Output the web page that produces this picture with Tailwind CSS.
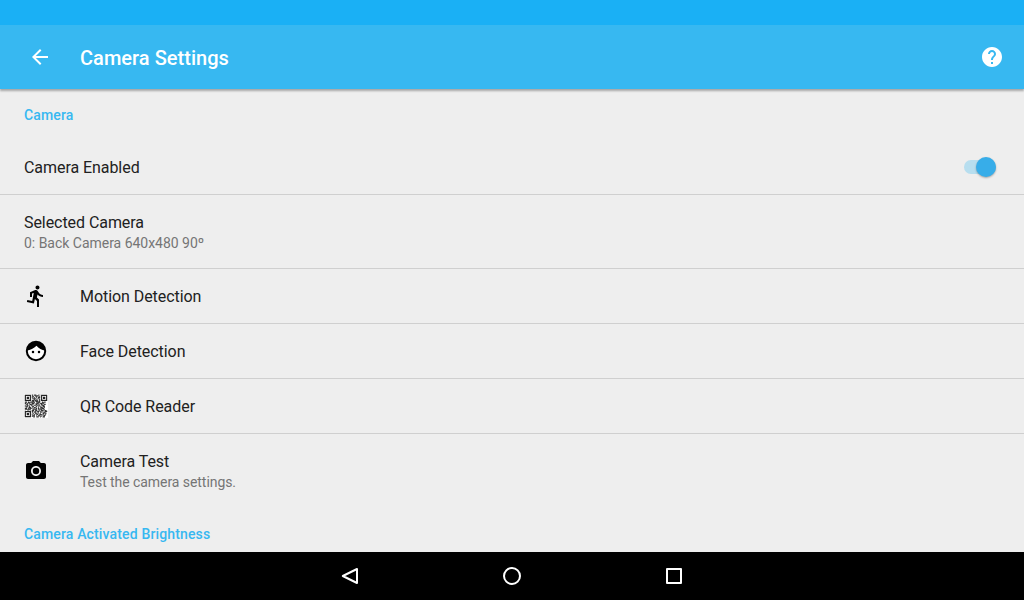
<!DOCTYPE html>
<html><head><meta charset="utf-8"><script src="https://cdn.jsdelivr.net/npm/@tailwindcss/browser@4"></script></head>
<body class="m-0">
<div class="w-[1024px] h-[600px] flex flex-col overflow-hidden bg-[#eeeeee] font-['Roboto',sans-serif]">
  <div class="h-[25px] shrink-0 bg-[#1ab0f5]"></div>
  <header class="h-[64px] shrink-0 bg-[#37b8f1] flex items-center pl-[28px] pr-[20px] shadow-[0_2px_2px_rgba(0,0,0,0.3)] relative z-10">
    <svg class="w-[24px] h-[24px]" viewBox="0 0 24 24" fill="#fff"><path d="M20 11H7.83l5.59-5.59L12 4l-8 8 8 8 1.41-1.41L7.83 13H20v-2z"/></svg>
    <h1 class="ml-[28px] pt-[2px] text-[20px] font-medium tracking-[0.03px] text-white flex-1">Camera Settings</h1>
    <svg class="w-[24px] h-[24px]" viewBox="0 0 24 24" fill="#fff"><path d="M12 2C6.48 2 2 6.48 2 12s4.48 10 10 10 10-4.48 10-10S17.52 2 12 2zm1 17h-2v-2h2v2zm2.07-7.75l-.9.92C13.45 12.9 13 13.5 13 15h-2v-.5c0-1.1.45-2.1 1.17-2.83l1.24-1.26c.37-.36.59-.86.59-1.41 0-1.1-.9-2-2-2s-2 .9-2 2H8c0-2.21 1.79-4 4-4s4 1.79 4 4c0 .88-.36 1.68-.93 2.25z"/></svg>
  </header>
  <main class="flex-1 min-h-0 overflow-hidden text-[16px] tracking-[-0.06px] text-[#212121]">
    <div class="h-[51px] pl-[24px] pt-[17px] text-[14px] leading-[18px] font-medium tracking-[0.15px] text-[#37b8f1]">Camera</div>
    <div class="h-[54px] pl-[24px] pr-[28px] flex items-center justify-between">
      <span class="pt-[2px]">Camera Enabled</span>
      <span class="relative w-[32px] h-[14px] rounded-full bg-[#37b8f1]/30 block">
        <span class="absolute right-0 top-[-3px] w-[20px] h-[20px] rounded-full bg-[#37ade9] shadow-[0_1px_2px_rgba(0,0,0,0.3)]"></span>
      </span>
    </div>
    <div class="h-px bg-[#cfcfcf]"></div>
    <div class="h-[73px] pl-[24px] pt-[18px]">
      <div class="leading-[20px]">Selected Camera</div>
      <div class="text-[14px] leading-[20px] tracking-[-0.02px] text-[#757575]">0: Back Camera 640x480 90º</div>
    </div>
    <div class="h-px bg-[#cfcfcf]"></div>
    <div class="h-[54px] flex items-center pl-[24px]">
      <svg class="w-[24px] h-[24px]" viewBox="0 0 24 24" fill="#000"><path d="M13.49 5.48c1.1 0 2-.9 2-2s-.9-2-2-2-2 .9-2 2 .9 2 2 2zm-3.6 13.9l1-4.4 2.1 2v6h2v-7.5l-2.1-2 .6-3c1.3 1.5 3.3 2.5 5.5 2.5v-2c-1.9 0-3.5-1-4.3-2.4l-1-1.6c-.4-.6-1-1-1.7-1-.3 0-.5.1-.8.1l-5.2 2.2v4.7h2v-3.4l1.8-.7-1.6 8.1-4.9-1-.4 2 7 1.4z"/></svg>
      <span class="ml-[32px] pt-[2px]">Motion Detection</span>
    </div>
    <div class="h-px bg-[#cfcfcf]"></div>
    <div class="h-[54px] flex items-center pl-[24px]">
      <svg class="w-[24px] h-[24px]" viewBox="0 0 24 24"><circle cx="12" cy="12" r="9.2" fill="#fff" stroke="#000" stroke-width="2"/><path d="M3 11.5A9 9 0 0 1 21 11.5C18 11 14.5 9.5 12.5 6.8C10 9.5 6 11 3 11.5z" fill="#000"/><circle cx="9" cy="13" r="1.25" fill="#000"/><circle cx="15" cy="13" r="1.25" fill="#000"/></svg>
      <span class="ml-[32px] pt-[2px]">Face Detection</span>
    </div>
    <div class="h-px bg-[#cfcfcf]"></div>
    <div class="h-[54px] flex items-center pl-[24px]">
      <svg class="w-[24px] h-[24px]" viewBox="0 0 31 31"><rect width="31" height="31" fill="#fff"/><path fill="none" stroke="#333" stroke-width="1.5" d="M10 1.500h2m1 0h3m2 0h1m1 0h1M11 2.500h1m2 0h1m1 0h3M10 3.500h3m2 0h2m2 0h2M10 4.500h1m2 0h1m2 0h1m1 0h3M11 5.500h3m1 0h1m2 0h2M10 6.500h1m2 0h3m1 0h1m2 0h1M12 7.500h2m2 0h1m2 0h2M10 8.500h3m1 0h2m1 0h1m2 0h1M11 9.500h2m2 0h3m1 0h2M1 10.500h3m1 0h2m1 0h3m1 0h2m2 0h1m1 0h3m2 0h2m1 0h2M2 11.500h1m2 0h3m2 0h2m1 0h1m2 0h3m1 0h1m2 0h3M1 12.500h2m1 0h1m2 0h1m2 0h3m2 0h1m1 0h2m2 0h3m1 0h1M3 13.500h2m2 0h3m1 0h1m3 0h2m2 0h1m2 0h2m2 0h2M1 14.500h1m2 0h2m1 0h1m1 0h2m2 0h3m1 0h2m1 0h1m2 0h3M2 15.500h3m2 0h1m2 0h1m1 0h1m3 0h1m2 0h2m1 0h1m1 0h3M1 16.500h1m1 0h2m1 0h2m2 0h3m2 0h2m1 0h1m2 0h1m2 0h3M3 17.500h1m2 0h3m2 0h1m1 0h2m3 0h1m2 0h3m2 0h1M1 18.500h3m1 0h1m2 0h2m1 0h1m3 0h2m1 0h2m1 0h1m1 0h3M2 19.500h2m2 0h2m3 0h3m1 0h1m2 0h1m2 0h3m1 0h1M1 20.500h1m2 0h3m1 0h1m2 0h1m2 0h3m2 0h2m1 0h1m2 0h2M10 21.500h3m2 0h2m2 0h1m2 0h3m2 0h2M10 22.500h2m2 0h1m2 0h3m1 0h1m2 0h1m2 0h3M11 23.500h1m1 0h3m2 0h1m2 0h2m1 0h1m1 0h2M10 24.500h2m3 0h1m1 0h2m2 0h1m2 0h3m1 0h1M12 25.500h1m1 0h3m2 0h1m1 0h1m2 0h2m1 0h2M10 26.500h1m2 0h1m2 0h2m2 0h3m1 0h1m2 0h1M11 27.500h3m2 0h1m1 0h3m2 0h1m1 0h3M10 28.500h2m1 0h1m2 0h1m2 0h1m1 0h2m2 0h2M12 29.500h2m2 0h3m2 0h1m2 0h3"/><path fill="#222" fill-rule="evenodd" d="M1 1h8v8H1zM2.500 2.500v5h5v-5zM22 1h8v8h-8zM23.500 2.500v5h5v-5zM1 22h8v8H1zM2.500 23.500v5h5v-5z"/><path fill="#222" d="M3.500 3.500h3v3h-3zM24.500 3.500h3v3h-3zM3.500 24.500h3v3h-3z"/></svg>
      <span class="ml-[32px] pt-[2px]">QR Code Reader</span>
    </div>
    <div class="h-px bg-[#cfcfcf]"></div>
    <div class="h-[73px] flex items-center pl-[24px]">
      <svg class="w-[24px] h-[24px]" viewBox="0 0 24 24" fill="#000"><circle cx="12" cy="12" r="3.2" fill="#000"/><path d="M9 2L7.17 4H4c-1.1 0-2 .9-2 2v12c0 1.1.9 2 2 2h16c1.1 0 2-.9 2-2V6c0-1.1-.9-2-2-2h-3.17L15 2H9zm3 15c-2.76 0-5-2.24-5-5s2.24-5 5-5 5 2.24 5 5-2.24 5-5 5z"/></svg>
      <div class="ml-[32px] self-start pt-[18px]">
        <div class="leading-[20px]">Camera Test</div>
        <div class="text-[14px] leading-[20px] text-[#757575]">Test the camera settings.</div>
      </div>
    </div>
    <div class="pl-[24px] pt-[18px] text-[14px] leading-[18px] font-medium tracking-[0.15px] text-[#37b8f1]">Camera Activated Brightness</div>
  </main>
  <nav class="h-[48px] shrink-0 bg-black flex items-center justify-center gap-[138px]">
    <svg class="w-[24px] h-[24px]" viewBox="0 0 24 24" fill="none" stroke="#fff" stroke-width="2" stroke-linejoin="round"><path d="M19 5v14L4.800 12z"/></svg>
    <svg class="w-[24px] h-[24px]" viewBox="0 0 24 24" fill="none" stroke="#fff" stroke-width="2"><circle cx="12" cy="12" r="8"/></svg>
    <svg class="w-[24px] h-[24px]" viewBox="0 0 24 24" fill="none" stroke="#fff" stroke-width="2" stroke-linejoin="round"><rect x="5" y="5" width="14" height="14"/></svg>
  </nav>
</div>
</body></html>
